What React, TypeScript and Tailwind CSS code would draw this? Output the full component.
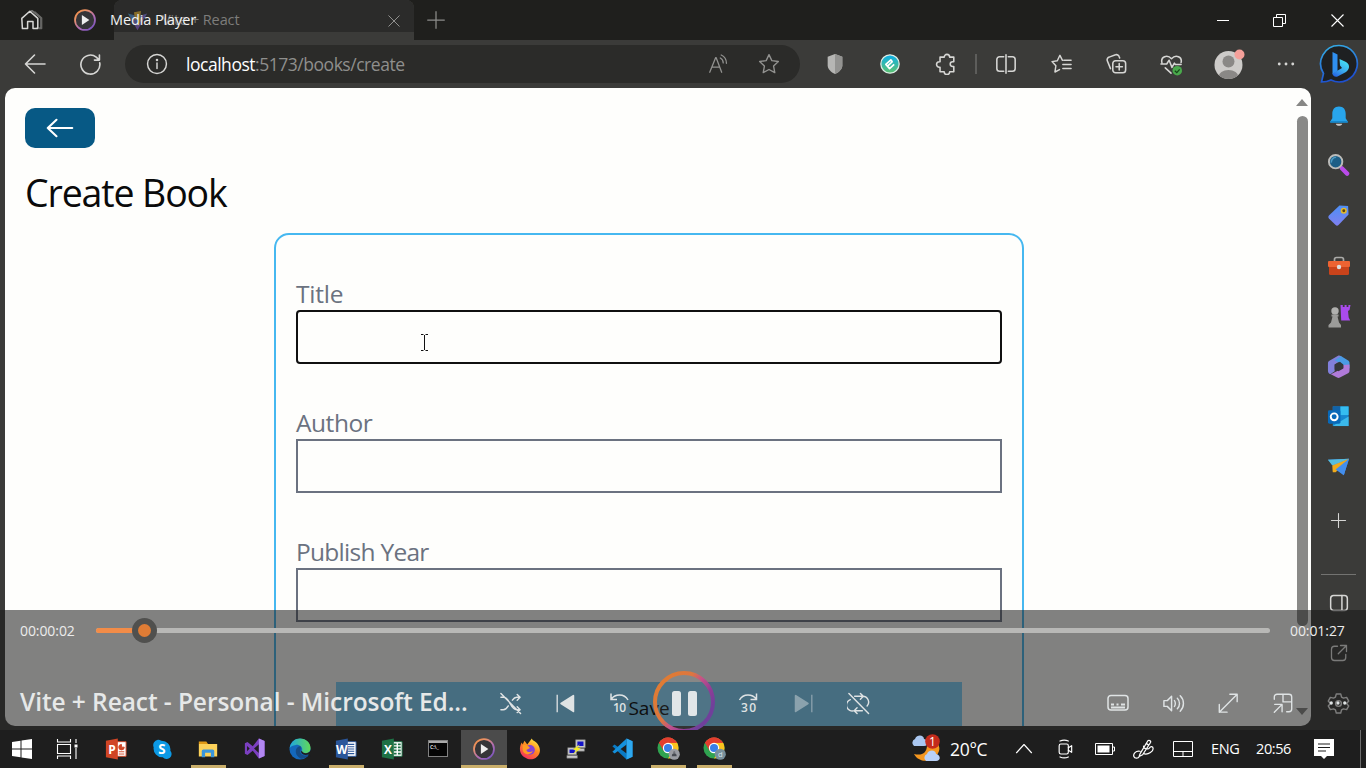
import React from "react";

type P = { children?: React.ReactNode; s?: number; w?: number; c?: string; vb?: string; className?: string };

function Ico({ children, s = 24, w = 1.5, c = "#d6d6d4", vb = "0 0 24 24", className = "" }: P) {
  return (
    <svg width={s} height={s} viewBox={vb} fill="none" stroke={c} strokeWidth={w} strokeLinecap="round" strokeLinejoin="round" className={"shrink-0 " + className}>
      {children}
    </svg>
  );
}

function Art({ children, s = 24, vb = "0 0 24 24", className = "" }: P) {
  return (
    <svg width={s} height={s} viewBox={vb} className={"shrink-0 " + className}>
      {children}
    </svg>
  );
}

function Cell({ children, className = "w-[55px]" }: { children?: React.ReactNode; className?: string }) {
  return <div className={"flex shrink-0 items-center justify-center " + className}>{children}</div>;
}

function PlayerLogo({ s = 22 }: { s?: number }) {
  return (
    <Art s={s}>
      <defs>
        <linearGradient id="ring" x1="0" y1="0" x2="0.8" y2="1">
          <stop offset="0" stopColor="#f58b3c" />
          <stop offset="0.3" stopColor="#e8926a" />
          <stop offset="0.65" stopColor="#b06cb4" />
          <stop offset="1" stopColor="#7b55c0" />
        </linearGradient>
      </defs>
      <circle cx="12" cy="12" r="10.9" fill="#353538" stroke="url(#ring)" strokeWidth="1.9" />
      <path d="M8.6 6.6v10.8l8.2-5.4z" fill="#eee" />
    </Art>
  );
}

function TabStrip() {
  return (
    <div className="relative flex h-10 shrink-0 bg-[#1f1f1d]">
      <div className="flex w-[114px] items-center">
        <div className="ml-[20px] w-[24px]">
          <Ico s={24} w={1.5} c="#d8d8d6">
            <path d="M9 4.5l3-1.8 9 7.2v10.3h-4.6" stroke="#777775" />
            <path d="M1.8 10.4L9.8 3.2l8 7.2v10.2h-4.8v-7H7.6v7H2.4z" />
            <path d="M15 4l6.6 6v10.6H19" stroke="#656563" />
          </Ico>
        </div>
        <div className="ml-[30px]">
          <PlayerLogo />
        </div>
      </div>
      <div className="flex h-10 w-[300px] flex-col rounded-t-lg bg-[#3b3b39]">
        <div className="flex h-8 items-center rounded-t-lg bg-[#2b2b2a]">
          <Art s={21} className="ml-[13px] mt-[8px] opacity-60">
            <defs>
              <linearGradient id="vite" x1="0" y1="0" x2="1" y2="1">
                <stop offset="0" stopColor="#348eb5" />
                <stop offset="1" stopColor="#9a33bd" />
              </linearGradient>
            </defs>
            <path d="M1 4l11 19L23 4l-10 3z" fill="url(#vite)" />
            <path d="M8 2.5l8-1.5-1 8h3l-6 10 1-8H9z" fill="#c49a28" />
          </Art>
          <span className="ml-[14px] mt-[7px] w-[100px] whitespace-nowrap text-[14.5px] leading-[20px] tracking-[-0.1px] text-[#7d7d7b]">Vite + React</span>
          <Ico s={14} w={1.5} c="#a0a09e" className="ml-[125px] mt-[9px]">
            <path d="M3 3l18 18M21 3L3 21" />
          </Ico>
        </div>
      </div>
      <div className="flex w-[43px] items-center justify-center">
        <Ico s={20} w={1.5} c="#8c8c8a">
          <path d="M12 2v20M2 12h20" />
        </Ico>
      </div>
      <div className="ml-auto flex items-center">
        <Cell className="w-[57px]">
          <div className="h-px w-[12px] bg-white" />
        </Cell>
        <Cell className="w-[57px]">
          <svg width="13" height="13" viewBox="0 0 13 13" fill="none" stroke="#fff">
            <path d="M.5 3.5h9v9h-9zM3.5 3V.5h9v9H10" />
          </svg>
        </Cell>
        <Cell className="w-[58px]">
          <svg width="13" height="13" viewBox="0 0 13 13" stroke="#fff" strokeWidth="1.1">
            <path d="M.5.5l12 12M12.5.5l-12 12" />
          </svg>
        </Cell>
      </div>
      <span className="absolute left-[110px] top-[10px] whitespace-nowrap text-[14.5px] leading-[20px] tracking-[-0.1px] text-[#f2f2f2]">Media Player</span>
    </div>
  );
}

function Toolbar() {
  return (
    <div className="flex h-12 shrink-0 items-center bg-[#3b3b39] pl-[7.5px]">
      <Cell>
        <Ico w={1.6} s={24}>
          <path d="M22 12H2.5M11.5 3L2.5 12l9 9" />
        </Ico>
      </Cell>
      <Cell>
        <Ico w={1.7} s={23}>
          <path d="M21.6 10.2A9.9 9.9 0 1 1 18 4.3l2.6 2.6M21.3 2.2v5.2h-5.2" />
        </Ico>
      </Cell>
      <div className="ml-[7.5px] flex h-[38px] w-[675px] shrink-0 items-center rounded-full bg-[#2b2b29]">
        <Ico s={22} w={1.6} className="ml-[21px]">
          <circle cx="12" cy="12" r="10.3" />
          <path d="M12 11v6" />
          <circle cx="12" cy="7.6" r=".6" fill="#d6d6d4" />
        </Ico>
        <span className="ml-[18px] w-[230px] whitespace-nowrap text-[17.5px] leading-6 tracking-[-0.47px] text-[#8f8f8d]">
          <span className="text-white">localhost</span>:5173/books/create
        </span>
        <Ico s={22} w={1.4} c="#929290" className="ml-[291px]">
          <path d="M3 21L9.5 5h.4L16 21M5.4 15.5h8.4M14.5 5.5c2 1 3.2 3 3.2 5.3M15.5 2.2c3.5 1.6 5.7 4.9 5.7 9" />
        </Ico>
        <Ico s={22} w={1.5} c="#929290" className="ml-[29px]">
          <path d="M12 1.8l3.1 6.5 7.1 1-5.2 5 1.3 7.1L12 18l-6.3 3.4L7 14.3l-5.2-5 7.1-1z" />
        </Ico>
      </div>
      <div className="w-[7.5px]" />
      <Cell>
        <Art s={22}>
          <path d="M12 1l8 3v9.5c0 4-3.5 7-8 9.5-4.500-2.500-8-5.500-8-9.500V4z" fill="#b6b6b4" />
          <path d="M12 1l8 3v9.500c0 4-3.500 7-8 9.500z" fill="#939391" />
        </Art>
      </Cell>
      <Cell>
        <Art s={20}>
          <defs>
            <linearGradient id="ext" x1="0" y1="0" x2="0" y2="1">
              <stop offset="0" stopColor="#0aaeea" />
              <stop offset="1" stopColor="#5fc36f" />
            </linearGradient>
          </defs>
          <circle cx="12" cy="12" r="11" fill="url(#ext)" stroke="#dcece5" strokeWidth="1.5" />
          <path d="M9 14.500l6-5.500M15 9.500l-2-2.500-6 5.500 4.500 5 5.500-5" fill="none" stroke="#fff" strokeWidth="2" strokeLinejoin="round" />
        </Art>
      </Cell>
      <Cell>
        <Ico s={22} w={1.7} className="ml-[2px]">
          <path d="M8 4.500h2a3 3 0 0 1 6 0h4.500v5h-1.300a2.600 2.600 0 0 0 0 5.200h1.300v5.800H16a3 3 0 0 1-6 0H5.500v-5H4.700a3 3 0 0 1 0-6h.8v-5z" />
        </Ico>
      </Cell>
      <div className="mx-[2px] h-5 w-[2px] bg-[#5d5d5b]" />
      <Cell>
        <Ico s={22} w={1.7}>
          <path d="M9.500 4H5a3 3 0 0 0-3 3v10a3 3 0 0 0 3 3h4.500M14.500 4H19a3 3 0 0 1 3 3v10a3 3 0 0 1-3 3h-4.500M12 2v20" />
        </Ico>
      </Cell>
      <Cell>
        <Ico s={22} w={1.600}>
          <path d="M13.600 8l-2.800-5.500L8 8.500l-5.800.9 4.200 4.500-1 6.800 5-2.600M15 8h8M14 12.500h9M14 17h9" />
        </Ico>
      </Cell>
      <Cell>
        <Ico s={22} w={1.700}>
          <rect x="8.500" y="8.500" width="14" height="13" rx="3" />
          <path d="M15.500 11.500v7M12 15h7M6 17l-3.500-8.500a3 3 0 0 1 2-4l7-2.500a3 3 0 0 1 4 2l.500 1.500" />
        </Ico>
      </Cell>
      <Cell>
        <Art s={23}>
          <path d="M2 10C.5 4 7.500 1 12 6c4.500-5 11.500-2 10 4M1 11.500h6l2.500-4 3 7.500 2.500-4.500 1 1.500h6M5.500 15.500l6 5.500" fill="none" stroke="#d6d6d4" strokeWidth="1.600" strokeLinecap="round" strokeLinejoin="round" />
          <circle cx="18" cy="18.500" r="5" fill="#4aa94c" />
          <path d="M15.500 18.500l2 2 3-3.500" fill="none" stroke="#164818" strokeWidth="1.300" />
        </Art>
      </Cell>
      <Cell className="w-[61px]">
        <svg width="34" height="32" viewBox="0 0 34 32" className="ml-[2px] mt-[-1px]">
          <clipPath id="face"><circle cx="15.500" cy="17" r="14" /></clipPath>
          <g clipPath="url(#face)">
            <rect width="34" height="34" fill="#cdcbc9" />
            <circle cx="15.500" cy="13.500" r="6" fill="#8a8886" />
            <ellipse cx="15.500" cy="29" rx="10" ry="7" fill="#8a8886" />
          </g>
          <circle cx="26.500" cy="6.500" r="5" fill="#f5a09a" />
        </svg>
      </Cell>
      <Cell className="w-[53px]">
        <Art s={18}>
          <circle cx="3" cy="12" r="1.900" fill="#d6d6d4" />
          <circle cx="12" cy="12" r="1.900" fill="#d6d6d4" />
          <circle cx="21" cy="12" r="1.900" fill="#d6d6d4" />
        </Art>
      </Cell>
      <Cell className="w-[53px]">
        <svg width="40" height="40" viewBox="0 0 40 40">
          <defs>
            <linearGradient id="bingRing" x1="0" y1="0" x2="0.300" y2="1">
              <stop offset="0" stopColor="#36b3e8" />
              <stop offset="1" stopColor="#1e50cf" />
            </linearGradient>
            <linearGradient id="bingB" x1="0" y1="1" x2="0.600" y2="0">
              <stop offset="0" stopColor="#2158e0" />
              <stop offset="0.500" stopColor="#3aa8ee" />
              <stop offset="1" stopColor="#45dff2" />
            </linearGradient>
          </defs>
          <path d="M20 1.500a18.200 18.200 0 1 1-8 34.500c-3 1.500-5.500 2-9.500 2l2-8.500A18.200 18.200 0 0 1 20 1.500z" fill="#1e2022" stroke="url(#bingRing)" strokeWidth="1.700" />
          <path d="M13.500 8l5 2.500V27l-5 3.500z" fill="#2f8ff0" />
          <path d="M20.500 15l6.500 3c5 3 3 8 0 10l-8.500 4.500q-4 1-5-3l9.500-5.500-2-2.500z" fill="url(#bingB)" />
        </svg>
      </Cell>
    </div>
  );
}

function Field({ label, focused = false, fit = "tracking-[-0.3px]" }: { label: string; focused?: boolean; fit?: string }) {
  return (
    <div className="mb-10 flex flex-col">
      <label className={"h-[35px] whitespace-nowrap text-[24.500px] leading-[37px] text-[#6b7280] " + fit}>{label}</label>
      <div className={focused ? "h-[54px] rounded-[4px] border-2 border-[#101010]" : "h-[54px] border-2 border-[#6b7280]"} />
    </div>
  );
}

function BookPage() {
  return (
    <div className="ml-[5px] flex h-[638px] w-[1306px] shrink-0 overflow-hidden rounded-[10px] bg-[#fefefc]">
      <div className="flex w-[1288px] flex-col p-5">
        <div className="flex h-10 w-[70px] shrink-0 items-center justify-center rounded-[10px] bg-[#075985]">
          <Ico s={28} w={1.800} c="#fff">
            <path d="M22.500 12H1.500M9 5l-7.500 7L9 19" />
          </Ico>
        </div>
        <h1 className="mt-5 h-[45px] shrink-0 whitespace-nowrap text-[37.500px] leading-[49px] tracking-[-1.130px] text-[#0a0a0a]">Create Book</h1>
        <div className="mx-auto mt-5 flex h-[700px] w-[750px] shrink-0 flex-col rounded-[15px] border-2 border-[#46b8f0] px-5 pt-[40px]">
          <Field label="Title" focused fit="tracking-[-0.2px]" />
          <Field label="Author" fit="tracking-[-0.45px]" />
          <Field label="Publish Year" fit="tracking-[-0.720px]" />
          <div className="mx-10 mt-5 h-[60px] shrink-0 bg-[#7dd3fc] text-center text-[19px] leading-[53px] text-black">Save</div>
        </div>
      </div>
      <div className="flex w-[18px] flex-col items-center">
        <svg width="12" height="7" viewBox="0 0 12 7" className="mt-[11px] shrink-0"><path d="M0 7l6-7 6 7z" fill="#878785" /></svg>
        <div className="mt-[10px] h-[510px] w-[11px] shrink-0 rounded-full bg-[#898987]" />
        <svg width="12" height="7" viewBox="0 0 12 7" className="mt-auto mb-[11px] shrink-0"><path d="M0 0l6 7 6-7z" fill="#878785" /></svg>
      </div>
    </div>
  );
}

function Sidebar() {
  return (
    <div className="flex w-[55px] shrink-0 flex-col items-center pt-[3px]">
      <Cell className="h-[49px]">
        <Art s={22}>
          <path d="M12 1.500c-5 0-7.300 3.500-7.300 8v5L2.500 18v1h19v-1l-2.200-3.500v-5c0-4.500-2.300-8-7.300-8z" fill="#28a5ec" />
          <path d="M2.500 17.500h19v1.700h-19z" fill="#1587cc" />
          <path d="M8.500 20.500h7c-.5 3-6.500 3-7 0z" fill="#c8c8c8" />
        </Art>
      </Cell>
      <Cell className="h-[50px]">
        <Art s={23} className="mt-[-2px]">
          <path d="M15.500 16l5.500 5.500" stroke="#b94bea" strokeWidth="4.500" strokeLinecap="round" />
          <circle cx="9" cy="9" r="7" fill="#1d5e86" stroke="#bcbcba" strokeWidth="2" />
          <path d="M4.500 10a5 5 0 0 1 5-5.500" stroke="#4c9ac2" strokeWidth="1.600" fill="none" />
        </Art>
      </Cell>
      <Cell className="h-[51px]">
        <Art s={23}>
          <defs><linearGradient id="tag" x1="0" y1="0" x2="0" y2="1"><stop stopColor="#4d8ff5" /><stop offset="1" stopColor="#7f80f0" /></linearGradient></defs>
          <path d="M13 1.500L22 2l.5 9L12 22c-1 .8-2 .8-3 0l-7-7c-.8-1-.8-2 0-3z" fill="url(#tag)" />
          <circle cx="17.500" cy="7" r="3.200" fill="#e2b92c" />
          <circle cx="17.500" cy="7" r="1.500" fill="#5d430d" />
        </Art>
      </Cell>
      <Cell className="h-[50px]">
        <Art s={24}>
          <path d="M7.500 8V5.500a2 2 0 0 1 2-2h5a2 2 0 0 1 2 2V8" fill="none" stroke="#aaaaa8" strokeWidth="1.700" />
          <rect x="1" y="7" width="22" height="6" rx="1" fill="#ed6332" />
          <path d="M2 13h20v6.500a1.500 1.500 0 0 1-1.500 1.500h-17A1.500 1.500 0 0 1 2 19.500z" fill="#c9431b" />
          <circle cx="12" cy="13" r="2.200" fill="#ddd" />
        </Art>
      </Cell>
      <Cell className="h-[50px]">
        <Art s={24}>
          <path d="M13.500 1h2.300v2h1.800V1h2v2h1.800V1h2.100l-1 5-1.500 1 .7 6.500 1.500 3h-9z" fill="#a94bed" />
          <circle cx="8" cy="7" r="3.700" fill="#b0b0ae" />
          <path d="M4.500 10.500h7v2h-1l1.500 6 2 2.500v2.500H1.500V21L4 18.500l1.500-6h-1z" fill="#9b9b99" />
        </Art>
      </Cell>
      <Cell className="h-[50px]">
        <Art s={23}>
          <path d="M12 .5L2.500 6C1.500 6.500 1 7.500 1 8.500v8c0 2 1 3 2.500 3.500L8 17V10l7-4.500V1.500c-1-.8-2-1.200-3-1z" fill="#8280dc" />
          <path d="M14.500 1l8 5c.6.500 1 1.300 1 2.200V14l-6.500-3.500L8 5.500z" fill="#4a9be5" />
          <path d="M23.500 10v6.500c0 1-.5 2-1.500 2.500l-8.500 4.500c-1 .5-2 .5-3 0L4 20l13-6.500V10.500z" fill="#b07ad9" />
          <path d="M8 10l5.500-3L17 10v4l-5 3-4-2z" fill="#35373c" />
        </Art>
      </Cell>
      <Cell className="h-[50px]">
        <Art s={23}>
          <path d="M6 1.500h16.500V22H6z" fill="#1687cf" />
          <path d="M6 1.500h8v6H6z" fill="#1163a9" />
          <path d="M14 1.500h8.500v9H14z" fill="#35bdf0" />
          <path d="M6 22l16.500-10V22z" fill="#3bb9eb" />
          <rect x="1" y="5.500" width="13" height="14" rx="1.500" fill="#0869b9" />
          <circle cx="7.500" cy="12.300" r="3.600" fill="none" stroke="#fff" strokeWidth="2" />
        </Art>
      </Cell>
      <Cell className="h-[50px]">
        <Art s={23}>
          <path d="M1 5l22-1-5.500 17-5.500-5z" fill="#3b8ded" />
          <path d="M1 5l22-1L5.500 11z" fill="#55bddf" />
          <path d="M5.500 11L23 4 9 18H6z" fill="#efaa1b" />
          <path d="M9 15L23 4l-5.500 17z" fill="#438eed" />
        </Art>
      </Cell>
      <Cell className="h-[59px]">
        <Ico s={17} className="mt-[-1px]"><path d="M12 2v20M2 12h20" /></Ico>
      </Cell>
      <div className="mt-[24px] h-px w-[35px] shrink-0 bg-[#737371]" />
      <Cell className="h-[55px]">
        <Ico s={20} w={1.800}><rect x="2" y="3" width="20" height="18" rx="3.500" /><path d="M15.500 3v18" /></Ico>
      </Cell>
      <Cell className="h-[46px]">
        <Ico s={18} w={1.700} c="#f0f0ee"><path d="M10 3H6a4 4 0 0 0-4 4v11a4 4 0 0 0 4 4h11a4 4 0 0 0 4-4v-4M14 2h8v8M22 2L11 13" /></Ico>
      </Cell>
      <Cell className="h-[54px]">
        <Ico s={23} w={1.500} c="#f8f8f6">
          <path d="M9.700 2h4.600l.9 3.300 2 1.100 3.300-.8 2.200 3.900-2.300 2.500 2.300 2.500-2.200 3.900-3.300-.8-2 1.100-.9 3.300H9.700l-.9-3.300-2-1.100-3.300.8-2.200-3.900L3.600 12 1.300 9.500l2.200-3.900 3.300.8 2-1.100z" />
          <circle cx="12" cy="12" r="3" />
        </Ico>
      </Cell>
    </div>
  );
}

function PlayerControls() {
  const c = "#dfe3e4";
  return (
    <div className="absolute left-0 top-[610px] flex h-[120px] w-full flex-col overflow-hidden bg-[#1a1a1a]/55">
      <div className="flex h-[41px] items-center text-[14px] tracking-[-0.08px] text-[#ececec]">
        <span className="ml-5 w-[76px] whitespace-nowrap">00:00:02</span>
        <div className="relative flex h-[5px] w-[1174px] rounded-full bg-[#b8b8b6]">
          <div className="w-[40px] rounded-l-full bg-[#f28c48]" />
          <div className="absolute left-[36px] top-[-10px] flex size-[25px] items-center justify-center rounded-full bg-[#50504e]">
            <div className="size-[13px] rounded-full bg-[#df7c35]" />
          </div>
        </div>
        <span className="ml-5 whitespace-nowrap">00:01:27</span>
      </div>
      <div className="mt-[26px] flex h-[54px] items-center">
        <span className="mt-[-2px] ml-5 w-[462.500px] whitespace-nowrap text-[24.500px] font-semibold tracking-[-0.080px] text-[#e6e8e8]">Vite + React - Personal - Microsoft Ed...</span>
        <Cell>
          <Ico s={23} c={c}>
            <path d="M2 5.500h2.500c7 0 7 13 14 13H22M2 18.500h2.500c2.500 0 4-2 5.200-4M14 8.500c1.200-1.800 2.500-3 4.500-3H22M19 2.500l3 3-3 3M19 15.500l3 3-3 3M2 1.500l20.500 21" />
          </Ico>
        </Cell>
        <Cell>
          <Art s={21}><path d="M2.500 2v20" stroke={c} strokeWidth="1.500" /><path d="M21 3v18L7 12z" fill={c} stroke={c} strokeWidth="2" strokeLinejoin="round" /></Art>
        </Cell>
        <Cell>
          <Art s={26} vb="0 0 26 26">
            <path d="M4 3.500v6h6M4.300 9C8 4 17 3 21 10" fill="none" stroke={c} strokeWidth="1.500" />
            <text x="6" y="22" fill={c} fontSize="12" fontWeight="600" textLength="13">10</text>
          </Art>
        </Cell>
        <Cell className="w-[73px]">
          <svg width="62" height="62" viewBox="0 0 62 62" className="mt-[-3px] mr-px shrink-0">
            <defs>
              <linearGradient id="pauseRing" x1="0.150" y1="0.200" x2="0.900" y2="0.700">
                <stop offset="0" stopColor="#df7b35" />
                <stop offset="0.350" stopColor="#dd7640" />
                <stop offset="0.550" stopColor="#c3518a" />
                <stop offset="0.800" stopColor="#8f3c96" />
                <stop offset="1" stopColor="#70409b" />
              </linearGradient>
            </defs>
            <circle cx="31" cy="31" r="29" fill="#fff" fillOpacity=".05" stroke="url(#pauseRing)" strokeWidth="4" />
            <rect x="19" y="20" width="9" height="25" rx="2.500" fill="#e1e6e8" />
            <rect x="35" y="20" width="9" height="25" rx="2.500" fill="#e1e6e8" />
          </svg>
        </Cell>
        <Cell>
          <Art s={26} vb="0 0 26 26">
            <path d="M21.500 3.500v6h-6M21.200 9C17.500 4 8.500 3 4.500 10" fill="none" stroke={c} strokeWidth="1.500" />
            <text x="6" y="22" fill={c} fontSize="12" fontWeight="600" textLength="15">30</text>
          </Art>
        </Cell>
        <Cell>
          <Art s={21} className="opacity-45"><path d="M21.500 2v20" stroke={c} strokeWidth="1.500" /><path d="M3 3v18l14-9z" fill={c} stroke={c} strokeWidth="2" strokeLinejoin="round" /></Art>
        </Cell>
        <Cell>
          <Ico s={23} c={c}>
            <path d="M8 4.500h8.500a6 6 0 0 1 4.500 10M16 19.500H7.500A6 6 0 0 1 3.500 8M14 1.500l3 3-3 3M10.500 16.500l-3 3 3 3M2 1.500l20.500 21" />
          </Ico>
        </Cell>
        <div className="w-[205px] shrink-0" />
        <Cell>
          <Ico s={24} c={c}><rect x="2" y="4.500" width="20" height="14.500" rx="3" /><path d="M5 13.500h3M10.500 13.500h2M15 13.500h4M5 16.500h14" strokeLinecap="butt" strokeWidth="2" /></Ico>
        </Cell>
        <Cell>
          <Ico s={23} c={c}><path d="M2 9v6h3.500L10 19.500v-15L5.500 9zM13 9c1.200 1.500 1.200 4.500 0 6M16 6.500c3 3 3 8 0 11M19 4c4.500 4.500 4.500 11.500 0 16" /></Ico>
        </Cell>
        <Cell>
          <Ico s={22} c={c}><path d="M14 2.500h8v8M22 2.500L2.500 22M2.500 13.500V22H11" /></Ico>
        </Cell>
        <Cell>
          <Ico s={22} c={c}><path d="M2.500 8V5.500a3 3 0 0 1 3-3h13a3 3 0 0 1 3 3v13a3 3 0 0 1-3 3H16M12 2.500v8.300h9.500M3 13.500h8v8M11 13.500l-8.500 8.500" /></Ico>
        </Cell>
        <Cell>
          <Art s={18} className="mr-px">
            <circle cx="3" cy="12" r="2.200" fill={c} />
            <circle cx="12" cy="12" r="2.200" fill={c} />
            <circle cx="21" cy="12" r="2.200" fill={c} />
          </Art>
        </Cell>
      </div>
    </div>
  );
}

function Task({ children, open = false, active = false }: { children: React.ReactNode; open?: boolean; active?: boolean }) {
  return (
    <div className={"flex h-[38px] w-[46px] shrink-0 flex-col items-center " + (active ? "bg-[#4b4b4b]" : "")}>
      <div className="flex h-[35px] items-center justify-center pt-[2px]">{children}</div>
      {open && <div className="h-[3px] w-[35px] bg-[#c9ae6a]" />}
      {active && <div className="h-[3px] w-full bg-[#c9ae6a]" />}
    </div>
  );
}

function OfficeIcon({ letter, color }: { letter: string; color: string }) {
  return (
    <Art s={22}>
      <path d="M12 4h11v16H12z" fill="#fff" stroke={color} />
      {letter === "P" ? (
        <path d="M18 7a3 3 0 1 0 3 3h-3zM15 15h6M15 17.500h6" fill={color} stroke={color} />
      ) : letter === "W" ? (
        <path d="M14 7h7M14 9.500h7M14 12h7M14 14.500h7M14 17h7" stroke={color} strokeWidth="1.200" />
      ) : (
        <path d="M14 7h3M18.500 7h3M14 10.300h3M18.500 10.300h3M14 13.600h3M18.500 13.600h3M14 17h3M18.500 17h3" stroke={color} strokeWidth="1.900" />
      )}
      <path d="M1 3l13-2.500v23L1 21z" fill={color} />
      <text x="7.500" y="17" fill="#fff" fontSize="13" fontWeight="700" textAnchor="middle">{letter}</text>
    </Art>
  );
}

function ChromeIcon({ badge }: { badge: string }) {
  return (
    <Art s={23}>
      <circle cx="11.500" cy="11.500" r="11" fill="#30a350" />
      <path d="M11.500 11.500L2 6a11 11 0 0 1 19 0z" fill="#e33e2e" />
      <path d="M11.500 6H21a11 11 0 0 1-9.500 16.500l5-8.500z" fill="#fcc31e" />
      <path d="M2 6l5 8.500 4.500-8.500h9.500A11 11 0 0 0 2 6z" fill="#e33e2e" />
      <circle cx="11.500" cy="11.500" r="5.400" fill="#fff" />
      <circle cx="11.500" cy="11.500" r="4.200" fill="#397fe8" />
      <circle cx="18" cy="18" r="5.800" fill={badge} />
      {badge === "#9a9ca2" ? <path d="M15.500 20a2.500 3 0 0 1 5 0zM16.800 16.300a1.200 1.200 0 1 1 2.400 0z" fill="#484b52" /> : <text x="18" y="21" fontSize="8" fill="#d5e1e7" textAnchor="middle">d</text>}
    </Art>
  );
}

function Taskbar() {
  return (
    <div className="flex h-[38px] shrink-0 items-center bg-[#1e1e1e] text-[15px] text-white">
      <Cell className="w-[44px]">
        <Art s={20} vb="0 0 20 20"><path d="M0 3l8.500-1.200v7.700H0zM9.500 1.600L20 0v9.500H9.500zM0 10.500h8.500v7.700L0 17zM9.500 10.500H20V20L9.500 18.400z" fill="#fff" /></Art>
      </Cell>
      <Cell className="w-[46px]">
        <Art s={22} vb="0 0 22 22"><path d="M1.500 1v3h13V1M1.500 6.500h13v9h-13zM1.500 21v-3h13v3M20 1v4M20 10v11" fill="none" stroke="#fff" strokeWidth="1.100" /><path d="M18.500 6.500h3v3h-3z" fill="#fff" /></Art>
      </Cell>
      <div className="w-[3px] shrink-0" />
      <Task><OfficeIcon letter="P" color="#d04525" /></Task>
      <Task>
        <Art s={20}><path d="M7 1a6 6 0 0 1 4 1A10.500 10.500 0 0 1 22 14a6 6 0 0 1-9 8A10.500 10.500 0 0 1 2 10a6.500 6.500 0 0 1 5-9z" fill="#0c99e5" /><text x="12" y="17.500" textAnchor="middle" fontWeight="700" fontSize="16" fill="#fff">S</text></Art>
      </Task>
      <Task open>
        <Art s={20}><path d="M1 3h9l2 3H1z" fill="#e19a15" /><path d="M1 6h22v15H1z" fill="#fdd25a" /><path d="M4.500 22v-7.500q0-2 2-2h11q2 0 2 2V22h-4v-5.500h-7V22z" fill="#3a96dc" /></Art>
      </Task>
      <Task>
        <Art s={21}>
          <path fillRule="evenodd" d="M1 6l3-1.500 6 5L17 .5l6.500 3v17L17 23.500l-7-9-6 5L1 18zM3.500 9v6l3-3zM17 7l-5.500 5 5.500 5z" fill="#7b3fc0" />
          <path d="M17 .5l6.500 3v17l-6.500 3z" fill="#b287f2" />
        </Art>
      </Task>
      <Task>
        <Art s={22}>
          <defs><linearGradient id="edge"><stop stopColor="#1fa7df" /><stop offset="1" stopColor="#61d957" /></linearGradient></defs>
          <circle cx="12" cy="12" r="11.500" fill="#1468bc" />
          <path d="M.7 11C2 4 6.500.5 12 .5c7 0 11.500 5 11.500 10.500 0 4-3 6-6 6-3 0-4-1.500-3.500-2.500C16 10 11 7 7.500 7.500 4 8 2 9 .7 11z" fill="url(#edge)" />
          <path d="M11 9c-6 3-4 11 2 13.500 4 .5 7-2 8.500-4.500-6 2.500-10 0-9-4 0-2 1-3 0-5z" fill="#154b85" />
          <path d="M24 14v6l-3-2c-3 1-7 .5-8-3l1-1c1 3 6 4 10 0z" fill="#1e1e1e" />
        </Art>
      </Task>
      <Task open><OfficeIcon letter="W" color="#2a569a" /></Task>
      <Task><OfficeIcon letter="X" color="#1e7145" /></Task>
      <Task>
        <svg width="20" height="17" viewBox="0 0 20 17"><rect x=".5" y=".5" width="19" height="16" fill="#050505" stroke="#818181" /><path d="M1 1h18v2H1z" fill="#aaa" /><text x="2" y="8.500" fontSize="5" fontWeight="700" fill="#ddd">C:\_</text></svg>
      </Task>
      <Task active><PlayerLogo s={22} /></Task>
      <Task>
        <Art s={22}>
          <defs><linearGradient id="fire" x1="0.800" y1="0" x2="0.200" y2="1"><stop stopColor="#fff044" /><stop offset="0.450" stopColor="#ff8b20" /><stop offset="1" stopColor="#f52565" /></linearGradient></defs>
          <path d="M14 .5c1 3 5 3 7 7 6 10-4 18-12 15C1 20-1 12 3 5l1 2 2-4 3 4z" fill="url(#fire)" />
          <circle cx="12" cy="13" r="5.300" fill="#8442d6" />
          <path d="M4 8c4-1 7 1 8 3l-4 2c1 3 5 3 7 1-1 5-10 5-11-1z" fill="#ff9c24" />
        </Art>
      </Task>
      <Task>
        <Art s={21}>
          <path d="M11 2h11v9H11zM9 12h12v3H9zM2 11h10v8H2zM1 20h12v3H1z" fill="#c8c8c8" stroke="#777" strokeWidth=".6" />
          <path d="M13 4h7v5h-7zM4 13h6v4H4z" fill="#1313c8" />
          <path d="M16 7l-8 6 4 1-5 5 10-7-4-1z" fill="#f5ed24" />
        </Art>
      </Task>
      <Task>
        <Art s={22}>
          <path fillRule="evenodd" d="M17 .5l6.500 3v17L17 23.500 1.500 9 4 7l13 10zM17 7" fill="#0a7ac4" />
          <path d="M17 .5V7L4 17l-2.500-2z" fill="#1490dc" />
          <path d="M17 .5l6.500 3v17l-6.500 3z" fill="#2ea8ef" />
        </Art>
      </Task>
      <Task open><ChromeIcon badge="#9a9ca2" /></Task>
      <Task open><ChromeIcon badge="#78909c" /></Task>
      <div className="ml-auto flex h-[38px] items-center">
        <svg width="36" height="30" viewBox="0 0 36 30" className="shrink-0">
          <path d="M17 11c0 8-5 11-13 9 5 10 21 9 25-3 1-3 0-5-1-7z" fill="#f5971f" />
          <path d="M4 12a4 4 0 0 1 1-7C7 0 14 1 14 5c5 1 5 7 0 7z" fill="#a9c6ef" />
          <path d="M16 27a4 4 0 0 1 1-7c2-5 9-4 9 0 5 1 5 7 0 7z" fill="#b8d0f6" />
          <circle cx="22.500" cy="7.500" r="7.300" fill="#c42b1c" />
          <text x="22.500" y="12" fill="#fff" fontSize="12" textAnchor="middle">1</text>
        </svg>
        <span className="ml-[4px] w-[54px] whitespace-nowrap text-[17.500px] tracking-[-0.3px]">20°C</span>
        <Cell className="w-[40px]"><Ico s={18} w={1.500} c="#fff"><path d="M2 17L12 6l10 11" /></Ico></Cell>
        <Cell className="w-[41px]"><Ico s={20} w={1.400} c="#fff"><rect x="5" y="6" width="11" height="12" rx="2" /><path d="M16 10.500l4-2.500v8l-4-2.500M6 2.500q5-2.500 10 0M6 21.500q5 2.500 10 0" /></Ico></Cell>
        <Cell className="w-[39px]"><svg width="20" height="12" viewBox="0 0 20 12"><path d="M.5.500h17v11H.5zM17.500 4h2v4h-2" fill="none" stroke="#fff" /><path d="M2.500 2.500h12v7h-12z" fill="#fff" /></svg></Cell>
        <Cell className="w-[39px]"><Ico s={21} w={1.400} c="#fff"><path d="M8 17L17 2c1-1 4 0 3 2l-9 14-4 2zM15 5l3 2M8 14c-5-1-8 3-7 6s6 2 6 0M13 17c5 1 10-3 10-6s-3-3-4-1-7 2-7-2" /></Ico></Cell>
        <Cell className="w-[39px]"><svg width="20" height="16" viewBox="0 0 20 16" fill="none" stroke="#fff"><path d="M.5.500h19v15H.5zM.5 10.500h19M10 10.500v5" /></svg></Cell>
        <span className="ml-[9px] w-[45px] whitespace-nowrap text-[14.500px] tracking-[-0.35px]">ENG</span>
        <span className="w-[50px] whitespace-nowrap text-[14.500px] tracking-[-0.4px]">20:56</span>
        <Cell className="w-[36px]"><svg width="20" height="20" viewBox="0 0 20 20"><path d="M0 0h20v17h-7l-3 3-3-3H0z" fill="#fff" /><path d="M4 5h12M4 8.500h12M4 12h8" stroke="#1e1e1e" strokeWidth="1.100" /></svg></Cell>
        <div className="ml-[18px] mr-[5px] h-full w-px bg-[#6c6c6c]" />
      </div>
    </div>
  );
}

export default function App() {
  return (
    <div className="relative flex h-[768px] w-[1366px] flex-col overflow-hidden bg-[#3b3b39] font-['Open_Sans','Noto_Sans',sans-serif]">
      <TabStrip />
      <Toolbar />
      <div className="flex h-[642px] shrink-0">
        <BookPage />
        <Sidebar />
      </div>
      <Taskbar />
      <svg width="9" height="17" viewBox="0 0 9 17" className="absolute left-[420px] top-[334px]" fill="none" stroke="#111">
        <path d="M1 .500h2.500M5.500.500H8M4.500 1v15M1 16.500h2.500M5.500 16.500H8" />
      </svg>
      <PlayerControls />
    </div>
  );
}
